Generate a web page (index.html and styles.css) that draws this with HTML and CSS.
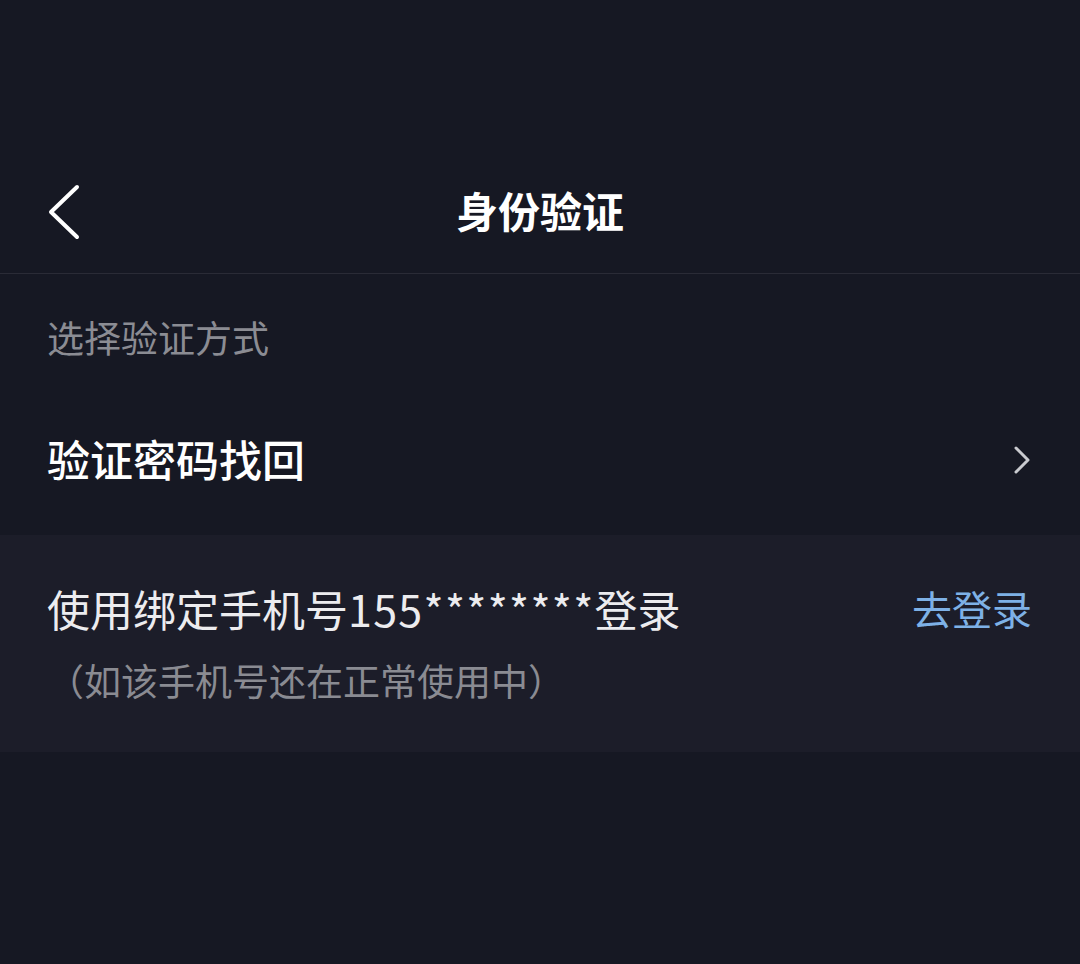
FILE: index.html
```html
<!DOCTYPE html>
<html lang="zh-CN">
<head>
  <meta charset="UTF-8" />
  <meta name="viewport" content="width=device-width, initial-scale=1.0"/>
  <title>身份验证</title>
  <link rel="stylesheet" href="styles.css">
</head>
<body>

  <!-- 状态栏占位 -->
  <div class="status-bar"></div>

  <!-- 顶部导航 -->
  <div class="nav-bar">
    <button class="back-btn" aria-label="返回">
      <svg width="40" height="60" viewBox="0 0 40 60">
        <polyline points="29,5 3,30 29,55" fill="none" stroke="#ffffff" stroke-width="4" stroke-linecap="round" stroke-linejoin="round"/>
      </svg>
    </button>
    <h1 class="nav-title">身份验证</h1>
  </div>

  <div class="section-label">选择验证方式</div>

  <!-- 验证方式 -->
  <div class="option-row">
    <span class="option-title">验证密码找回</span>
    <svg class="arrow" width="24" height="34" viewBox="0 0 24 34">
      <polyline points="6,5 18,17 6,29" fill="none" stroke="#c9cacf" stroke-width="3" stroke-linecap="round" stroke-linejoin="round"/>
    </svg>
  </div>

  <div class="phone-row">
    <div class="phone-line">
      <span class="phone-text">使用绑定手机号<span class="phone-num">155********</span>登录</span>
      <a class="phone-link" href="#">去登录</a>
    </div>
    <div class="phone-note">（如该手机号还在正常使用中）</div>
  </div>

</body>
</html>
```

FILE: styles.css
```css
body {
  margin: 0;
  background-color: #161823;
  font-family: "Noto Sans CJK SC", "Noto Sans", sans-serif;
  color: #ffffff;
  min-height: 964px;
}

.status-bar {
  height: 150px;
}

.nav-bar {
  position: relative;
  height: 123px;
  display: flex;
  align-items: center;
  justify-content: center;
  border-bottom: 1px solid #2a2b36;
}

.back-btn {
  position: absolute;
  left: 48px;
  top: 32px;
  width: 40px;
  height: 60px;
  padding: 0;
  background: none;
  border: none;
}

.back-btn svg {
  display: block;
}

.nav-title {
  margin: -4px 0 0;
  font-size: 42px;
  font-weight: 700;
  line-height: 52px;
}

.section-label {
  padding: 37px 47px 22px;
  font-size: 37px;
  line-height: 52px;
  color: #8b8c93;
}

.option-row {
  height: 146px;
  padding: 0 46px 4px 47px;
  display: flex;
  align-items: center;
  justify-content: space-between;
}

.option-title {
  font-size: 43px;
  font-weight: 500;
  line-height: 52px;
}

.arrow {
  display: block;
  margin-top: 4px;
}

.phone-row {
  background-color: #1c1d29;
  padding: 47px 48px 46px 47px;
}

.phone-line {
  display: flex;
  align-items: center;
  justify-content: space-between;
}

.phone-text {
  font-size: 43px;
  line-height: 52px;
  color: #ececef;
}

.phone-num {
  letter-spacing: 1.3px;
}

.phone-link {
  font-size: 40px;
  line-height: 52px;
  color: #7eb1e6;
  text-decoration: none;
}

.phone-note {
  margin-top: 20px;
  font-size: 37px;
  line-height: 52px;
  color: #8a8b92;
}
```
